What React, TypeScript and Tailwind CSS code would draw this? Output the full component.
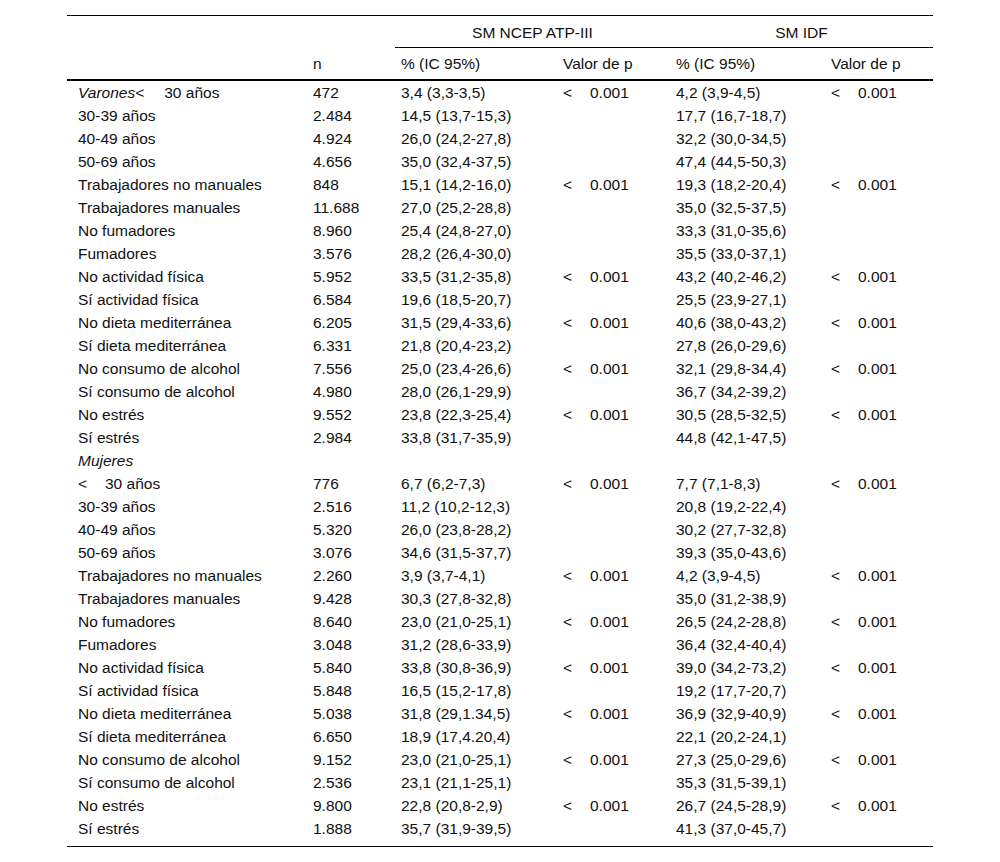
type Row = {
  label: React.ReactNode;
  n?: string;
  a?: string;
  pa?: boolean;
  b?: string;
  pb?: boolean;
};

const Lt = ({ children }: { children: React.ReactNode }) => (
  <span className="inline-block w-[27px]">{children}</span>
);

const P = () => (
  <span>
    <Lt>&lt;</Lt>0.001
  </span>
);

const rows: Row[] = [
  { label: <><i>Varones</i>&lt;<span className="inline-block w-[20px]" />30 años</>, n: "472", a: "3,4 (3,3-3,5)", pa: true, b: "4,2 (3,9-4,5)", pb: true },
  { label: "30-39 años", n: "2.484", a: "14,5 (13,7-15,3)", b: "17,7 (16,7-18,7)" },
  { label: "40-49 años", n: "4.924", a: "26,0 (24,2-27,8)", b: "32,2 (30,0-34,5)" },
  { label: "50-69 años", n: "4.656", a: "35,0 (32,4-37,5)", b: "47,4 (44,5-50,3)" },
  { label: "Trabajadores no manuales", n: "848", a: "15,1 (14,2-16,0)", pa: true, b: "19,3 (18,2-20,4)", pb: true },
  { label: "Trabajadores manuales", n: "11.688", a: "27,0 (25,2-28,8)", b: "35,0 (32,5-37,5)" },
  { label: "No fumadores", n: "8.960", a: "25,4 (24,8-27,0)", b: "33,3 (31,0-35,6)" },
  { label: "Fumadores", n: "3.576", a: "28,2 (26,4-30,0)", b: "35,5 (33,0-37,1)" },
  { label: "No actividad física", n: "5.952", a: "33,5 (31,2-35,8)", pa: true, b: "43,2 (40,2-46,2)", pb: true },
  { label: "Sí actividad física", n: "6.584", a: "19,6 (18,5-20,7)", b: "25,5 (23,9-27,1)" },
  { label: "No dieta mediterránea", n: "6.205", a: "31,5 (29,4-33,6)", pa: true, b: "40,6 (38,0-43,2)", pb: true },
  { label: "Sí dieta mediterránea", n: "6.331", a: "21,8 (20,4-23,2)", b: "27,8 (26,0-29,6)" },
  { label: "No consumo de alcohol", n: "7.556", a: "25,0 (23,4-26,6)", pa: true, b: "32,1 (29,8-34,4)", pb: true },
  { label: "Sí consumo de alcohol", n: "4.980", a: "28,0 (26,1-29,9)", b: "36,7 (34,2-39,2)" },
  { label: "No estrés", n: "9.552", a: "23,8 (22,3-25,4)", pa: true, b: "30,5 (28,5-32,5)", pb: true },
  { label: "Sí estrés", n: "2.984", a: "33,8 (31,7-35,9)", b: "44,8 (42,1-47,5)" },
  { label: <i>Mujeres</i> },
  { label: <><Lt>&lt;</Lt>30 años</>, n: "776", a: "6,7 (6,2-7,3)", pa: true, b: "7,7 (7,1-8,3)", pb: true },
  { label: "30-39 años", n: "2.516", a: "11,2 (10,2-12,3)", b: "20,8 (19,2-22,4)" },
  { label: "40-49 años", n: "5.320", a: "26,0 (23,8-28,2)", b: "30,2 (27,7-32,8)" },
  { label: "50-69 años", n: "3.076", a: "34,6 (31,5-37,7)", b: "39,3 (35,0-43,6)" },
  { label: "Trabajadores no manuales", n: "2.260", a: "3,9 (3,7-4,1)", pa: true, b: "4,2 (3,9-4,5)", pb: true },
  { label: "Trabajadores manuales", n: "9.428", a: "30,3 (27,8-32,8)", b: "35,0 (31,2-38,9)" },
  { label: "No fumadores", n: "8.640", a: "23,0 (21,0-25,1)", pa: true, b: "26,5 (24,2-28,8)", pb: true },
  { label: "Fumadores", n: "3.048", a: "31,2 (28,6-33,9)", b: "36,4 (32,4-40,4)" },
  { label: "No actividad física", n: "5.840", a: "33,8 (30,8-36,9)", pa: true, b: "39,0 (34,2-73,2)", pb: true },
  { label: "Sí actividad física", n: "5.848", a: "16,5 (15,2-17,8)", b: "19,2 (17,7-20,7)" },
  { label: "No dieta mediterránea", n: "5.038", a: "31,8 (29,1.34,5)", pa: true, b: "36,9 (32,9-40,9)", pb: true },
  { label: "Sí dieta mediterránea", n: "6.650", a: "18,9 (17,4.20,4)", b: "22,1 (20,2-24,1)" },
  { label: "No consumo de alcohol", n: "9.152", a: "23,0 (21,0-25,1)", pa: true, b: "27,3 (25,0-29,6)", pb: true },
  { label: "Sí consumo de alcohol", n: "2.536", a: "23,1 (21,1-25,1)", b: "35,3 (31,5-39,1)" },
  { label: "No estrés", n: "9.800", a: "22,8 (20,8-2,9)", pa: true, b: "26,7 (24,5-28,9)", pb: true },
  { label: "Sí estrés", n: "1.888", a: "35,7 (31,9-39,5)", b: "41,3 (37,0-45,7)" },
];

const cols = "grid grid-cols-[240px_88px_162px_113px_155px_108px]";

export default function App() {
  return (
    <div
      className="w-[1000px] h-[862px] bg-white text-[#111] text-[15.5px] leading-[18px] pt-[15px] pl-[67px]"
      style={{ fontFamily: '"Liberation Sans", Arial, sans-serif' }}
    >
      <div className="w-[866px] border-t border-black border-b">
        {/* header row 1 */}
        <div className={`${cols} h-[32px]`}>
          <div />
          <div />
          <div className="col-span-2 border-b border-black flex items-center justify-center pt-[2px]">SM NCEP ATP-III</div>
          <div className="col-span-2 border-b border-black flex items-center justify-center pt-[2px]">SM IDF</div>
        </div>
        {/* header row 2 */}
        <div className={`${cols} h-[33px] border-b-2 border-black items-center`}>
          <div />
          <div className="pl-[6px]">n</div>
          <div className="pl-[6px]">% (IC 95%)</div>
          <div className="pl-[6px]">Valor de p</div>
          <div className="pl-[6px]">% (IC 95%)</div>
          <div className="pl-[6px]">Valor de p</div>
        </div>
        {/* body */}
        <div className="pb-[6px]">
          {rows.map((r, i) => (
            <div key={i} className={`${cols} h-[23px] pt-[1px] items-center whitespace-nowrap`}>
              <div className="pl-[11px]">{r.label}</div>
              <div className="pl-[6px]">{r.n}</div>
              <div className="pl-[6px]">{r.a}</div>
              <div className="pl-[6px]">{r.pa && <P />}</div>
              <div className="pl-[6px]">{r.b}</div>
              <div className="pl-[6px]">{r.pb && <P />}</div>
            </div>
          ))}
        </div>
      </div>
    </div>
  );
}
